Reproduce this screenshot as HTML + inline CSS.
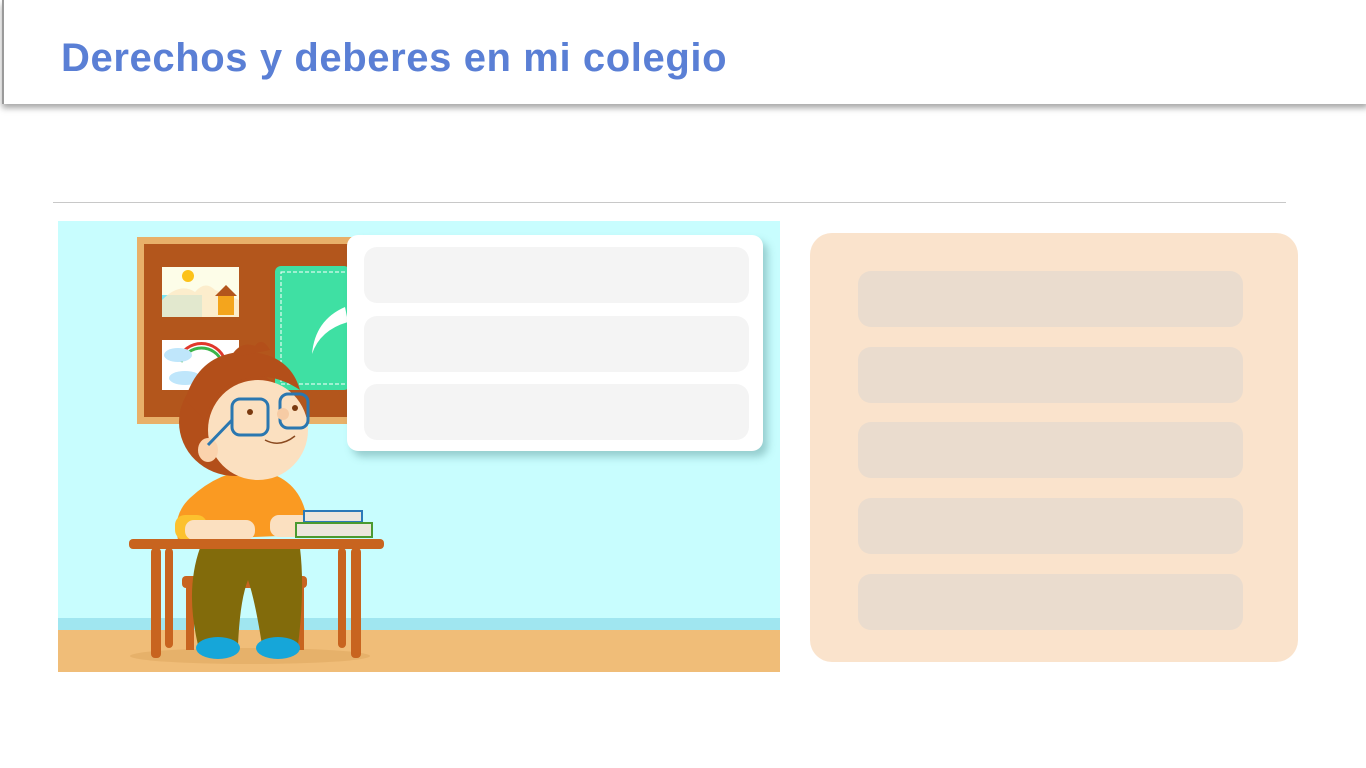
<!DOCTYPE html>
<html><head><meta charset="utf-8"><style>
html,body{margin:0;padding:0;width:1366px;height:768px;background:#fff;overflow:hidden;font-family:"Liberation Sans",sans-serif;position:relative}
.hdr{position:absolute;left:2px;top:0;width:1364px;height:104px;background:#fff;border-left:2px solid #9a9a9a;box-shadow:0 4px 6px rgba(0,0,0,.35)}
.hdr h1{position:absolute;left:57px;top:36px;margin:0;font-size:40px;font-weight:bold;color:#5a7fd5;letter-spacing:0.6px;white-space:nowrap}
.line{position:absolute;left:53px;top:202px;width:1233px;height:1px;background:#c8c8c8}
.panel{position:absolute;left:810px;top:233px;width:488px;height:429px;background:#fae3cc;border-radius:22px}
.prow{position:absolute;left:48px;width:385px;height:56px;background:#eadcce;border-radius:13px}
.bubble{position:absolute;left:347px;top:235px;width:416px;height:216px;background:#fff;border-radius:11px;box-shadow:5px 6px 8px rgba(60,120,120,.35)}
.brow{position:absolute;left:17px;width:385px;height:56px;background:#f4f4f4;border-radius:13px}
svg{position:absolute;left:0;top:0}
</style></head><body>
<div class="hdr"><h1>Derechos y deberes en mi colegio</h1></div>
<div class="line"></div>
<svg width="1366" height="768" viewBox="0 0 1366 768">
<rect x="58" y="221" width="722" height="451" fill="#c8fdfe"/>
<rect x="58" y="618" width="722" height="12" fill="#a0e6f0"/>
<rect x="58" y="630" width="722" height="42" fill="#f0bd78"/>
<ellipse cx="250" cy="656" rx="120" ry="8" fill="#e0a860" opacity=".6"/>
<!-- board -->
<rect x="137" y="237" width="215" height="187" fill="#e8b069"/>
<rect x="144" y="244" width="206" height="173" fill="#b3561c"/>
<rect x="162" y="267" width="77" height="50" fill="#fdfde8"/>
<rect x="162" y="295" width="40" height="22" fill="#7de6f5"/>
<circle cx="188" cy="276" r="6" fill="#fcc21a"/>
<path d="M162 300 Q180 282 195 292 Q205 280 215 290 L239 300 L239 317 L162 317Z" fill="#fbe9c4" opacity=".8"/>
<rect x="218" y="295" width="16" height="20" fill="#f4a51d"/>
<path d="M215 296 L226 285 L237 296Z" fill="#b3561c"/>
<rect x="162" y="340" width="77" height="50" fill="#fff"/>
<path d="M178 360 A25 25 0 0 1 225 360" fill="none" stroke="#e0382c" stroke-width="3"/>
<path d="M181 362 A22 22 0 0 1 222 362" fill="none" stroke="#3bb54a" stroke-width="3"/>
<ellipse cx="178" cy="355" rx="14" ry="7" fill="#bfe6fb"/>
<ellipse cx="185" cy="378" rx="16" ry="7" fill="#bfe6fb"/>
<rect x="275" y="266" width="75" height="124" rx="6" fill="#3fe0a3"/>
<rect x="281" y="272" width="69" height="112" fill="none" stroke="#fff" stroke-width="1" stroke-dasharray="4 2"/>
<path d="M345 307 Q315 320 312 354 Q320 330 348 322Z" fill="#fff"/>
<!-- chair -->
<rect x="182" y="576" width="125" height="12" rx="4" fill="#c8641f"/>
<rect x="186" y="585" width="8" height="65" fill="#c8641f"/>
<rect x="296" y="585" width="8" height="65" fill="#c8641f"/>
<!-- boy body -->
<path d="M190 498 Q220 470 255 470 Q295 475 305 510 L305 535 L178 540 Q172 515 190 498Z" fill="#fa9a22"/>
<rect x="175" y="515" width="32" height="25" rx="10" fill="#fcc12e"/>
<rect x="185" y="520" width="70" height="20" rx="9" fill="#fbe0c0"/>
<rect x="270" y="515" width="40" height="22" rx="9" fill="#fbe0c0"/>
<path d="M200 548 L300 548 Q305 590 298 645 L262 645 Q255 600 248 580 Q240 600 238 645 L198 645 Q185 590 200 548Z" fill="#826b0b"/>
<ellipse cx="218" cy="648" rx="22" ry="11" fill="#16a6d9"/>
<ellipse cx="278" cy="648" rx="22" ry="11" fill="#16a6d9"/>
<!-- head -->
<ellipse cx="235" cy="422" rx="56" ry="54" fill="#b34f1a"/>
<ellipse cx="258" cy="430" rx="50" ry="50" fill="#fbe0c0"/>
<path d="M185 400 Q200 350 250 352 Q290 355 300 390 Q270 370 240 380 Q215 385 205 420Z" fill="#b34f1a"/>
<path d="M230 358 Q240 340 255 346 Q262 336 270 350Z" fill="#b34f1a"/>
<ellipse cx="208" cy="450" rx="10" ry="12" fill="#fbd3ad"/>
<rect x="232" y="399" width="36" height="36" rx="8" fill="none" stroke="#2a77b0" stroke-width="3"/>
<rect x="280" y="394" width="28" height="34" rx="8" fill="none" stroke="#2a77b0" stroke-width="3"/>
<path d="M232 420 L208 445" stroke="#2a77b0" stroke-width="3"/>
<circle cx="250" cy="412" r="3" fill="#7a3a10"/>
<circle cx="295" cy="408" r="3" fill="#7a3a10"/>
<circle cx="283" cy="414" r="6" fill="#f6cba4"/>
<path d="M265 440 Q280 448 295 436" fill="none" stroke="#8a4a20" stroke-width="1.5"/>
<!-- books -->
<rect x="304" y="511" width="58" height="11" fill="#ece6dc" stroke="#2a79b8" stroke-width="2"/>
<rect x="296" y="523" width="76" height="14" fill="#ece6dc" stroke="#4a9a30" stroke-width="2"/>
<!-- desk -->
<rect x="129" y="539" width="255" height="10" rx="4" fill="#c8641f"/>
<rect x="151" y="548" width="10" height="110" rx="4" fill="#c8641f"/>
<rect x="165" y="548" width="8" height="100" rx="4" fill="#c8641f"/>
<rect x="338" y="548" width="8" height="100" rx="4" fill="#c8641f"/>
<rect x="351" y="548" width="10" height="110" rx="4" fill="#c8641f"/>
</svg>
<div class="bubble">
<div class="brow" style="top:12px"></div>
<div class="brow" style="top:81px"></div>
<div class="brow" style="top:149px"></div>
</div>
<div class="panel">
<div class="prow" style="top:38px"></div>
<div class="prow" style="top:114px"></div>
<div class="prow" style="top:189px"></div>
<div class="prow" style="top:265px"></div>
<div class="prow" style="top:341px"></div>
</div>
</body></html>
